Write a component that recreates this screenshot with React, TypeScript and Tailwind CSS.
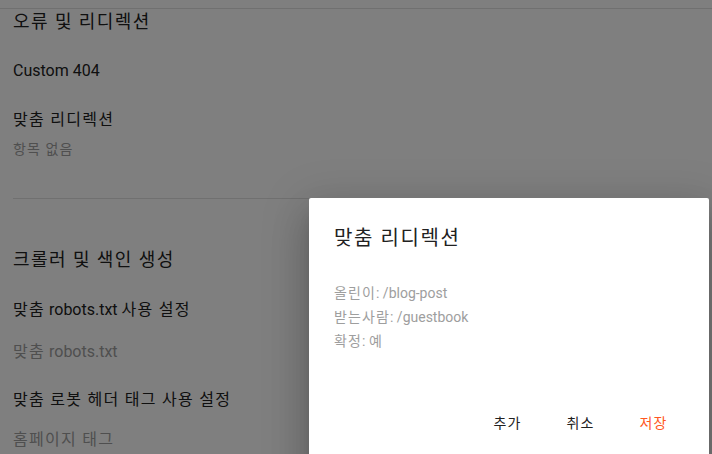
import React from "react";

// Korean runs get a little extra tracking to match the wider hangul of the reference
function K({ children }: { children: React.ReactNode }) {
  return <span className="tracking-[0.08em]">{children}</span>;
}

export default function App() {
  return (
    <div className="relative h-[454px] w-[712px] overflow-hidden bg-white font-['Roboto','Noto_Sans_CJK_KR',sans-serif] text-[#212121]">
      {/* Settings page underneath */}
      <div className="mt-2 border-t border-[#e0e0e0]">
        <div className="px-[13px]">
          <h2 className="text-[18px] leading-[26px]"><K>오류 및 리디렉션</K></h2>
          <div className="mt-6 text-[16px] leading-6">Custom 404</div>
          <div className="mt-[25px] text-[16px] leading-6"><K>맞춤 리디렉션</K></div>
          <div className="mt-[7px] text-[14px] leading-5 text-[#9e9e9e]"><K>항목 없음</K></div>

          <div className="mt-[39px] border-t border-[#e0e0e0]" />

          <h2 className="mt-12 text-[18px] leading-[26px]"><K>크롤러 및 색인 생성</K></h2>
          <div className="mt-[25px] text-[16px] leading-6">
            <K>맞춤</K> robots.txt <K>사용 설정</K>
          </div>
          <div className="mt-[18px] text-[16px] leading-6 text-[#9e9e9e]">
            <K>맞춤</K> robots.txt
          </div>
          <div className="mt-6 text-[16px] leading-6"><K>맞춤 로봇 헤더 태그 사용 설정</K></div>
          <div className="mt-4 text-[16px] leading-6 text-[#9e9e9e]"><K>홈페이지 태그</K></div>
        </div>
      </div>

      {/* Modal backdrop */}
      <div className="absolute inset-0 bg-black/50" />

      {/* Dialog */}
      <div className="absolute left-[309px] top-[198px] h-[300px] w-[400px] rounded-[2px] bg-white shadow-[0_11px_15px_-7px_rgba(0,0,0,0.2),0_24px_38px_3px_rgba(0,0,0,0.14),0_9px_46px_8px_rgba(0,0,0,0.12)]">
        <div className="px-[25px] pt-[26px]">
          <h3 className="text-[20px] leading-7 text-[#212121]"><K>맞춤 리디렉션</K></h3>
          <div className="mt-[29px] text-[14px] leading-6 text-[#9e9e9e]">
            <div><K>올린이</K>: /blog-post</div>
            <div><K>받는사람</K>: /guestbook</div>
            <div><K>확정</K>: <K>예</K></div>
          </div>
        </div>
        <div className="mt-[52px] flex justify-end gap-2 pr-[23px]">
          <button className="h-9 w-[65px] text-[14px] text-[#212121]"><K>추가</K></button>
          <button className="h-9 w-[65px] text-[14px] text-[#212121]"><K>취소</K></button>
          <button className="h-9 w-[65px] text-[14px] text-[#ff5722]"><K>저장</K></button>
        </div>
      </div>
    </div>
  );
}
